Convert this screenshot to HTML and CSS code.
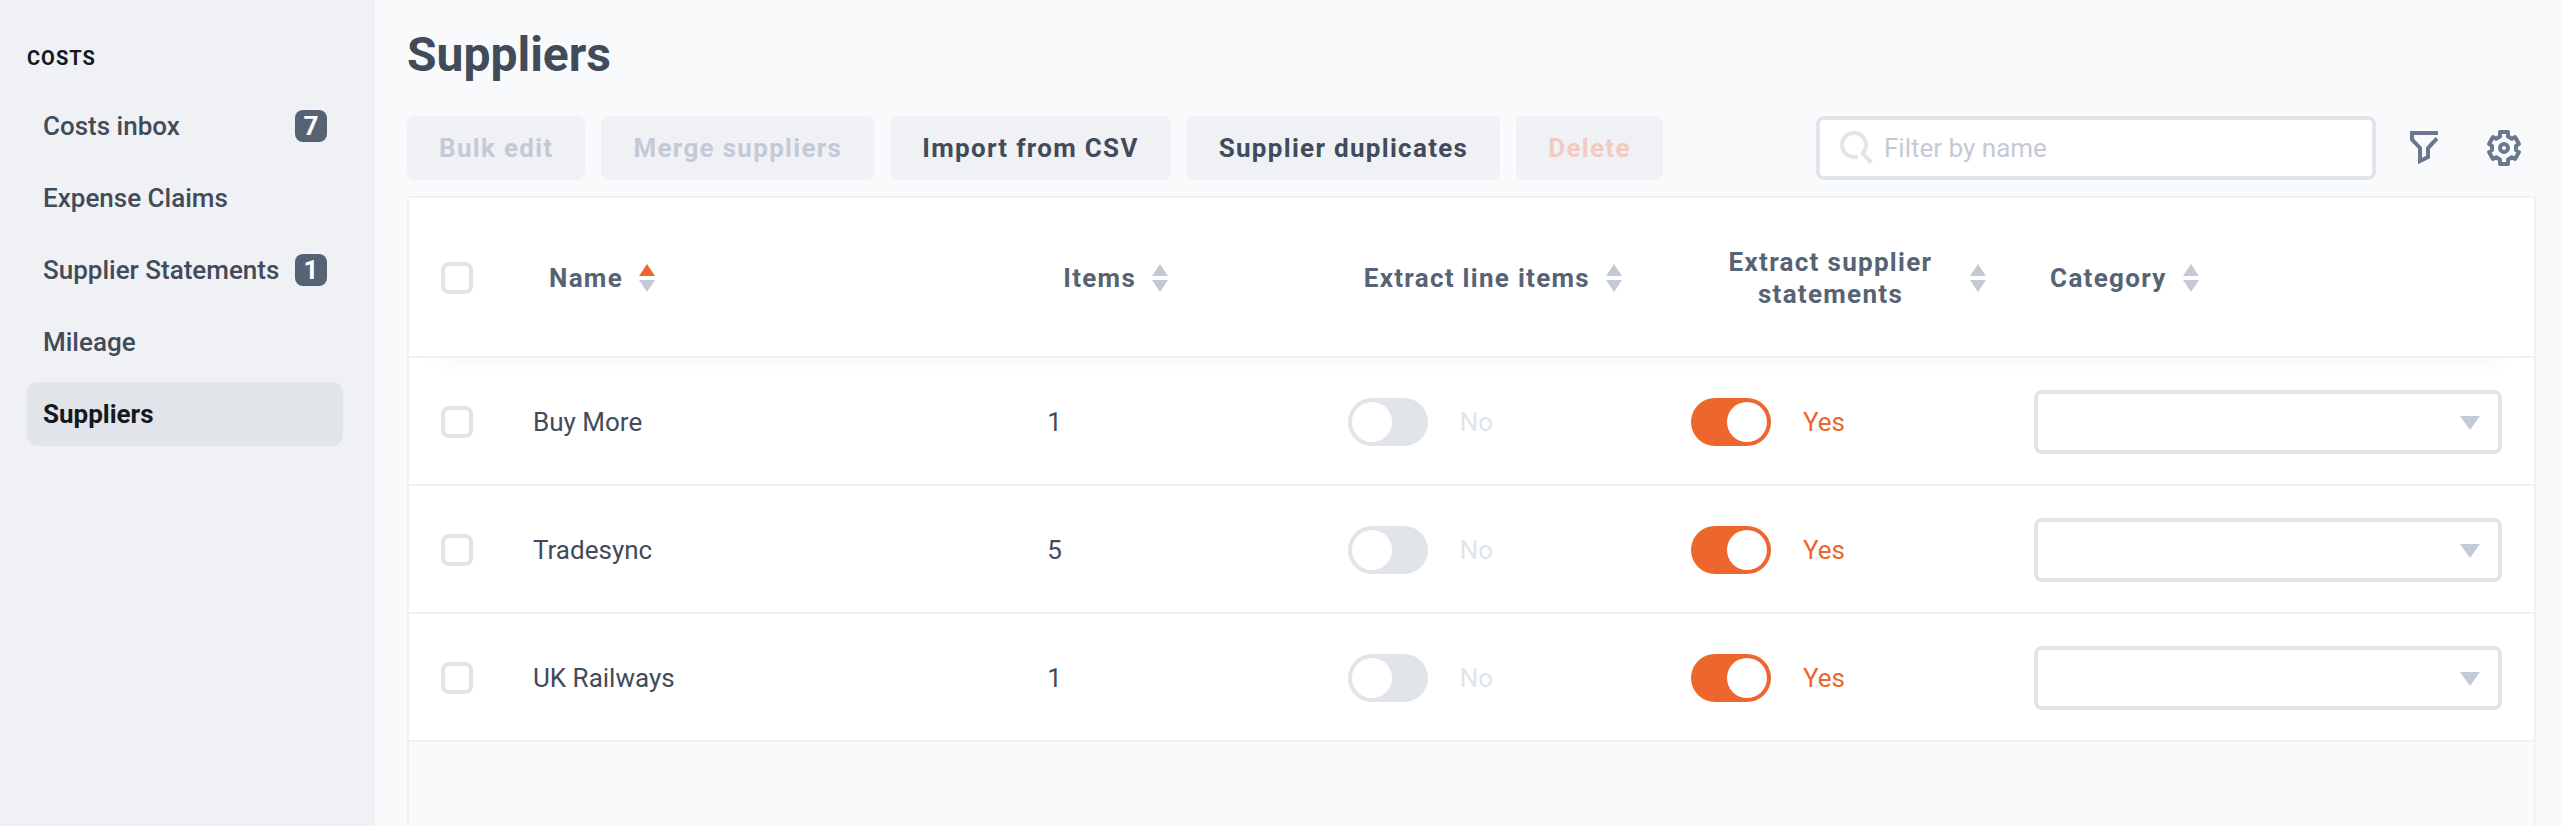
FILE: index.html
```html
<!DOCTYPE html>
<html lang="en">
<head>
  <meta charset="UTF-8" />
  <meta name="viewport" content="width=device-width, initial-scale=1.0" />
  <title>Suppliers</title>
  <link rel="stylesheet" href="styles.css">
</head>
<body>
<svg width="0" height="0" class="sprite" aria-hidden="true">
  <symbol id="sort" viewBox="0 0 16 28">
    <path class="up" d="M8 0l8 12H0z" />
    <path d="M8 28L0 16h16z" />
  </symbol>
</svg>
<div class="app">
  <nav class="sidebar">
    <h2 class="sidebar-title">COSTS</h2>
    <ul class="menu">
      <li><a class="menu-item" href="#">Costs inbox <span class="badge">7</span></a></li>
      <li><a class="menu-item" href="#">Expense Claims</a></li>
      <li><a class="menu-item" href="#">Supplier Statements <span class="badge">1</span></a></li>
      <li><a class="menu-item" href="#">Mileage</a></li>
      <li><a class="menu-item active" href="#">Suppliers</a></li>
    </ul>
  </nav>
  <main class="main">
    <h1 class="title">Suppliers</h1>
    <div class="toolbar">
      <button class="btn" type="button" disabled>Bulk edit</button>
      <button class="btn" type="button" disabled>Merge suppliers</button>
      <button class="btn" type="button">Import from CSV</button>
      <button class="btn" type="button">Supplier duplicates</button>
      <button class="btn danger" type="button" disabled>Delete</button>
      <label class="search">
        <svg width="34" height="34" viewBox="0 0 34 34" fill="none" stroke="currentColor" stroke-width="4">
          <path d="M18 25.300A12 12 0 1 1 22.500 22.500" />
          <path d="M31.500 31.500L21.500 21.500" />
        </svg>
        <input type="text" placeholder="Filter by name" aria-label="Filter by name" />
      </label>
      <button class="icon-btn" type="button" aria-label="Filters">
        <svg width="28" height="34" viewBox="0 0 28 34" fill="none" stroke="currentColor" stroke-width="4">
          <path d="M28 2H2v6.500l8 8.500v13l8-4V17l9-9.500" />
        </svg>
      </button>
      <button class="icon-btn" type="button" aria-label="Settings">
        <svg width="36" height="36" viewBox="0 0 36 36" fill="none" stroke="currentColor" stroke-width="4" stroke-linejoin="round">
          <circle cx="18" cy="18" r="4" />
          <path d="M14 2h8v4.600l3.800 2.100L29 7l4 6.900-3 2v4.200l3 2L29 29l-3.200-1.700-3.800 2.100V34h-8v-4.600l-3.800-2.100L7 29l-4-6.900 3-2v-4.200l-3-2L7 7l3.200 1.700L14 6.600z" />
        </svg>
      </button>
    </div>
    <div class="table-wrap">
      <table class="table">
        <colgroup>
          <col class="col-check" />
          <col class="col-name" />
          <col class="col-items" />
          <col class="col-toggle" />
          <col class="col-toggle" />
          <col />
        </colgroup>
        <thead>
          <tr>
            <th class="check-cell"><input class="check" type="checkbox" aria-label="Select all suppliers" /></th>
            <th><button class="sort asc" type="button">Name <svg width="16" height="28"><use href="#sort" /></svg></button></th>
            <th><button class="sort" type="button">Items <svg width="16" height="28"><use href="#sort" /></svg></button></th>
            <th><button class="sort" type="button">Extract line items <svg width="16" height="28"><use href="#sort" /></svg></button></th>
            <th><button class="sort" type="button">Extract supplier statements <svg width="16" height="28"><use href="#sort" /></svg></button></th>
            <th><button class="sort" type="button">Category <svg width="16" height="28"><use href="#sort" /></svg></button></th>
          </tr>
        </thead>
        <tbody>
          <tr>
            <td class="check-cell"><input class="check" type="checkbox" aria-label="Select Buy More" /></td>
            <td>Buy More</td>
            <td>1</td>
            <td><label class="toggle"><input type="checkbox" /><span>No</span></label></td>
            <td><label class="toggle"><input type="checkbox" checked /><span>Yes</span></label></td>
            <td class="category-cell">
              <div class="select">
                <select aria-label="Category for Buy More"><option></option></select>
                <svg width="20" height="14" viewBox="0 0 20 14"><path d="M0 0h20L10 14z" /></svg>
              </div>
            </td>
          </tr>
          <tr>
            <td class="check-cell"><input class="check" type="checkbox" aria-label="Select Tradesync" /></td>
            <td>Tradesync</td>
            <td>5</td>
            <td><label class="toggle"><input type="checkbox" /><span>No</span></label></td>
            <td><label class="toggle"><input type="checkbox" checked /><span>Yes</span></label></td>
            <td class="category-cell">
              <div class="select">
                <select aria-label="Category for Tradesync"><option></option></select>
                <svg width="20" height="14" viewBox="0 0 20 14"><path d="M0 0h20L10 14z" /></svg>
              </div>
            </td>
          </tr>
          <tr>
            <td class="check-cell"><input class="check" type="checkbox" aria-label="Select UK Railways" /></td>
            <td>UK Railways</td>
            <td>1</td>
            <td><label class="toggle"><input type="checkbox" /><span>No</span></label></td>
            <td><label class="toggle"><input type="checkbox" checked /><span>Yes</span></label></td>
            <td class="category-cell">
              <div class="select">
                <select aria-label="Category for UK Railways"><option></option></select>
                <svg width="20" height="14" viewBox="0 0 20 14"><path d="M0 0h20L10 14z" /></svg>
              </div>
            </td>
          </tr>
        </tbody>
      </table>
    </div>
  </main>
</div>
</body>
</html>
```

FILE: styles.css
```css
* {
  box-sizing: border-box;
  margin: 0;
  padding: 0;
}
body {
  background: #f9fafc;
  color: #414b5a;
  font-family: Roboto, "Liberation Sans", sans-serif;
  font-size: 26px;
  line-height: 32px;
}
button,
input,
select {
  font: inherit;
}
.sprite {
  position: absolute;
}
.app {
  display: flex;
  min-height: 100vh;
}

/* sidebar */
.sidebar {
  flex: 0 0 375px;
  padding: 42px 32px 32px 27px;
  background: #f0f1f5;
}
.sidebar-title {
  margin-bottom: 20px;
  color: #15191f;
  font-size: 20px;
  font-weight: 700;
  letter-spacing: 1px;
}
.menu {
  display: flex;
  flex-direction: column;
  gap: 8px;
  list-style: none;
}
.menu-item {
  display: flex;
  align-items: center;
  justify-content: space-between;
  height: 64px;
  padding: 0 16px;
  border-radius: 10px;
  color: #414b5a;
  font-weight: 500;
  text-decoration: none;
  white-space: nowrap;
}
.menu-item.active {
  background: #e1e4e8;
  color: #15191f;
  font-weight: 700;
}
.badge {
  width: 32px;
  border-radius: 8px;
  background: #566374;
  color: #fff;
  font-weight: 700;
  text-align: center;
}

/* main */
.main {
  display: flex;
  flex: 1;
  flex-direction: column;
  min-width: 0;
  padding: 24px 26px 0 32px;
}
.title {
  margin-bottom: 30px;
  font-size: 48px;
  font-weight: 700;
  line-height: 62px;
}
.toolbar {
  display: flex;
  gap: 16px;
  margin-bottom: 16px;
}
.btn {
  height: 64px;
  padding: 0 32px;
  border: 0;
  border-radius: 8px;
  background: #f0f1f5;
  color: #414b5a;
  font-weight: 700;
  letter-spacing: 0.05em;
  white-space: nowrap;
}
.btn:disabled {
  color: #c4cad5;
}
.btn.danger:disabled {
  color: #f1cbc2;
}
.search {
  display: flex;
  align-items: center;
  gap: 10px;
  width: 560px;
  height: 64px;
  margin-left: auto;
  padding: 0 20px;
  border: 4px solid #e1e4e9;
  border-radius: 8px;
  background: #fff;
  color: #e1e4e9;
}
.search input {
  flex: 1;
  min-width: 0;
  border: 0;
  outline: 0;
  background: none;
  color: #414b5a;
}
.search input::placeholder {
  color: #c4cad5;
}
.icon-btn {
  display: flex;
  align-items: center;
  justify-content: center;
  width: 64px;
  height: 64px;
  border: 0;
  background: none;
  color: #69788f;
}

/* table */
.table-wrap {
  flex: 1;
  border: 2px solid #f0f1f5;
  border-bottom: 0;
}
.table {
  width: 100%;
  border-collapse: separate;
  border-spacing: 0;
  table-layout: fixed;
}
.col-check {
  width: 108px;
}
.col-name {
  width: 24.2%;
}
.col-items {
  width: 14.14%;
}
.col-toggle {
  width: 16.15%;
}
th,
td {
  padding: 2px 16px 0;
  border-bottom: 2px solid #f0f1f5;
  background: #fff;
  text-align: left;
  vertical-align: middle;
}
th {
  height: 160px;
}
td {
  height: 128px;
}
thead {
  position: relative;
  box-shadow: 0 28px 20px -28px rgba(0, 0, 0, 0.05);
}
.check-cell {
  padding-left: 32px;
}
.category-cell {
  padding-right: 32px;
}
.check {
  display: block;
  width: 32px;
  height: 32px;
  border: 4px solid #e1e4e9;
  border-radius: 8px;
  background: #fff;
  appearance: none;
}
.check:checked {
  border-color: #ed662b;
  background: #ed662b;
}
.sort {
  display: flex;
  align-items: center;
  gap: 16px;
  padding: 0 16px;
  border: 0;
  background: none;
  color: #566374;
  font-weight: 700;
  letter-spacing: 0.05em;
}
.sort svg {
  flex: none;
  fill: #c4cad5;
}
.sort.asc {
  --up: #ed662b;
}
.up {
  fill: var(--up, #c4cad5);
}
.toggle {
  display: flex;
  align-items: center;
  gap: 32px;
  color: #e1e4e9;
}
.toggle input {
  display: flex;
  width: 80px;
  height: 48px;
  padding: 4px;
  border-radius: 24px;
  background: #e1e4e9;
  appearance: none;
}
.toggle input::before {
  content: "";
  width: 40px;
  height: 40px;
  border-radius: 50%;
  background: #fff;
}
.toggle input:checked {
  justify-content: flex-end;
  background: #ed662b;
}
.toggle input:checked + span {
  color: #ed662b;
}
.select {
  position: relative;
}
.select select {
  display: block;
  width: 100%;
  height: 64px;
  padding: 0 60px 0 16px;
  border: 4px solid #e1e4e9;
  border-radius: 8px;
  background: #fff;
  color: #414b5a;
  appearance: none;
}
.select svg {
  position: absolute;
  top: 26px;
  right: 22px;
  fill: #c4cad5;
  pointer-events: none;
}
```
